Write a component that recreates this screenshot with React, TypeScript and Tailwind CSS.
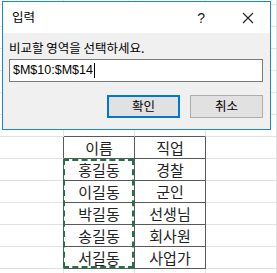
import React from 'react';

const COLS = [64, 71, 71, 71];
const names = ['홍길동', '이길동', '박길동', '송길동', '서길동'];
const jobs = ['경찰', '군인', '선생님', '회사원', '사업가'];

function cellText(r: number, c: number) {
  if (r === 7) return c === 1 ? '이름' : c === 2 ? '직업' : '';
  if (r >= 8 && r <= 12) return c === 1 ? names[r - 8] : c === 2 ? jobs[r - 8] : '';
  return '';
}

function Cell({ r, c }: { r: number; c: number }) {
  const inTable = r >= 7 && r <= 12 && (c === 1 || c === 2);
  const rightDark = inTable || (r >= 7 && r <= 12 && c === 0);
  const bottomDark = inTable || (r === 6 && (c === 1 || c === 2));
  return (
    <div
      className={
        'flex items-center justify-center border-r border-b text-[15px] leading-none text-[#222] ' +
        (rightDark ? 'border-r-[#5a5a5a] ' : 'border-r-[#e2e2e2] ') +
        (bottomDark ? 'border-b-[#5a5a5a]' : 'border-b-[#e2e2e2]')
      }
    >
      {cellText(r, c)}
    </div>
  );
}

export default function App() {
  const rows = Array.from({ length: 14 }, (_, i) => i);
  return (
    <div
      className="relative w-[277px] h-[273px] overflow-hidden bg-white"
      style={{ fontFamily: '"Noto Sans CJK KR", "Noto Sans", sans-serif' }}
    >
      {/* sheet grid */}
      <div
        className="grid"
        style={{
          gridTemplateColumns: COLS.map((w) => w + 'px').join(' '),
          gridTemplateRows: '5px repeat(12, 22px) 8px',
        }}
      >
        {rows.map((r) => COLS.map((_, c) => <Cell key={r + '-' + c} r={r} c={c} />))}
      </div>

      {/* copy marquee */}
      <div className="absolute left-[63px] top-[159px] w-[71px] h-[109px] border-2 border-dashed border-[#217346]" />

      {/* dialog */}
      <div className="absolute left-[2px] top-[1px] w-[269px] h-[129px] border border-[#1a86d9] bg-[#f0f0f0] flex flex-col">
        <div className="h-[31px] bg-white flex items-center pl-[9px] pr-[16px]">
          <span className="text-[12.5px] leading-none text-black">입력</span>
          <span
            className="ml-auto text-[14px] leading-none text-[#222]"
            style={{ fontFamily: '"Liberation Sans", sans-serif' }}
          >
            ?
          </span>
          <svg className="ml-[37px]" width="12" height="12" viewBox="0 0 12 12">
            <path d="M1 1L11 11M11 1L1 11" stroke="#222" strokeWidth="1.1" fill="none" />
          </svg>
        </div>
        <div className="flex flex-col px-[6px]">
          <div className="pt-[8px] text-[12.5px] leading-[14px] text-black">
            비교할 영역을 선택하세요.
          </div>
          <div
            className="mt-[4px] h-[23px] w-[254px] bg-white border border-[#7a7a7a] flex items-center pl-[3px] text-[12.5px] text-black"
            style={{ fontFamily: '"Liberation Sans", sans-serif' }}
          >
            $M$10:$M$14
            <span className="ml-[1px] w-px h-[15px] bg-black" />
          </div>
          <div className="mt-[13px] flex justify-end gap-[10px] pr-[1px]">
            <button className="w-[73px] h-[23px] bg-[#e1e1e1] border-2 border-[#0078d7] text-[12.5px] leading-none text-black">
              확인
            </button>
            <button className="w-[73px] h-[23px] bg-[#e1e1e1] border border-[#adadad] text-[12.5px] leading-none text-black">
              취소
            </button>
          </div>
        </div>
      </div>
    </div>
  );
}
